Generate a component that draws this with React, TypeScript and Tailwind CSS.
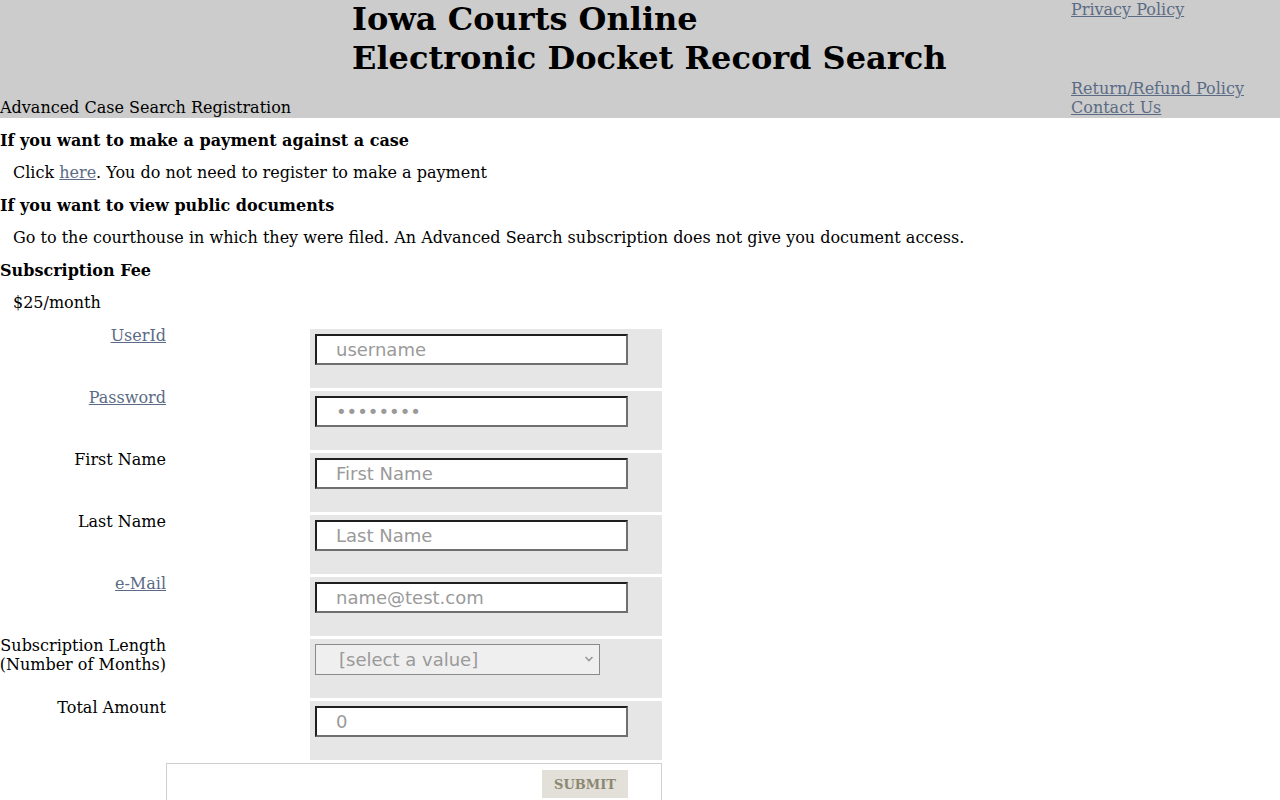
import React from 'react';

const serif = '"DejaVu Serif", "Liberation Serif", serif';
const sans = '"DejaVu Sans", "Liberation Sans", sans-serif';

const linkCls = 'text-[#5b6b85] underline';

function TextInput({ placeholder, type = 'text' }: { placeholder: string; type?: string }) {
  return (
    <input
      type={type}
      placeholder={placeholder}
      className="w-[313px] h-[31px] bg-white border-2 border-t-[#1f1f1f] border-l-[#1f1f1f] border-b-[#6f6f6f] border-r-[#6f6f6f] pl-[19px] text-[18px] text-[#333] placeholder:text-[#9a9a9a] outline-none"
      style={{ fontFamily: sans }}
    />
  );
}

type Row = { label: React.ReactNode; field: React.ReactNode };

export default function App() {
  const rows: Row[] = [
    { label: <a href="#" className={linkCls}>UserId</a>, field: <TextInput placeholder="username" /> },
    { label: <a href="#" className={linkCls}>Password</a>, field: <TextInput placeholder="••••••••" /> },
    { label: 'First Name', field: <TextInput placeholder="First Name" /> },
    { label: 'Last Name', field: <TextInput placeholder="Last Name" /> },
    { label: <a href="#" className={linkCls}>e-Mail</a>, field: <TextInput placeholder="name@test.com" /> },
    {
      label: (
        <>
          Subscription Length
          <br />
          (Number of Months)
        </>
      ),
      field: (
        <div className="relative w-[285px] h-[31px]">
          <select
            disabled
            className="appearance-none w-full h-full bg-[#efefef] border border-[#8a8a8a] pl-[23px] text-[18px] text-[#9a9a9a]"
            style={{ fontFamily: sans }}
          >
            <option>[select a value]</option>
          </select>
          <svg className="absolute right-[6px] top-[11px] pointer-events-none" width="10" height="8" viewBox="0 0 10 8">
            <path d="M1.5 2 L5 5.5 L8.5 2" fill="none" stroke="#9a9a9a" strokeWidth="1.6" />
          </svg>
        </div>
      ),
    },
    { label: 'Total Amount', field: <TextInput placeholder="0" /> },
  ];

  return (
    <div className="min-h-[800px] bg-white text-black text-[16px] leading-[19px]" style={{ fontFamily: serif }}>
      {/* header */}
      <div className="flex h-[118px] bg-[#cccccc]">
        <div className="w-[352px] flex flex-col justify-end pb-[1px]">
          <div>Advanced Case Search Registration</div>
        </div>
        <div className="flex-1">
          <h1 className="text-[32px] leading-[39px] font-bold">
            Iowa Courts Online
            <br />
            Electronic Docket Record Search
          </h1>
        </div>
        <div className="w-[209px] flex flex-col justify-between pb-[1px]">
          <a href="#" className={linkCls}>Privacy Policy</a>
          <div className="flex flex-col">
            <a href="#" className={linkCls}>Return/Refund Policy</a>
            <a href="#" className={linkCls}>Contact Us</a>
          </div>
        </div>
      </div>

      {/* info */}
      <div className="pt-[6px] leading-[32.5px]">
        <div className="font-bold pt-[2px] leading-[30.5px]">If you want to make a payment against a case</div>
        <div className="pl-[13px]">
          Click <a href="#" className={linkCls}>here</a>. You do not need to register to make a payment
        </div>
        <div className="font-bold pt-[2px] leading-[30.5px]">If you want to view public documents</div>
        <div className="pl-[13px]">
          Go to the courthouse in which they were filed. An Advanced Search subscription does not give you document access.
        </div>
        <div className="font-bold pt-[2px] leading-[30.5px]">Subscription Fee</div>
        <div className="pl-[13px]">$25/month</div>
      </div>

      {/* form */}
      <form className="mt-[7px] grid grid-cols-[166px_144px_352px]" onSubmit={e => e.preventDefault()}>
        {rows.map((r, i) => (
          <React.Fragment key={i}>
            <div className="h-[62px] flex justify-end">
              <div className="text-right whitespace-nowrap">{r.label}</div>
            </div>
            <div />
            <div className="h-[62px] pt-[3px]">
              <div className="h-[59px] bg-[#e6e6e6] pt-[5px] pl-[5px]">{r.field}</div>
            </div>
          </React.Fragment>
        ))}
        <div />
        <div className="col-span-2 pt-[3px]">
          <div className="h-[50px] border border-[#cfcfcf] flex justify-end items-start pt-[6px] pr-[33px]">
            <button
              type="submit"
              className="w-[86px] h-[28px] bg-[#e2e0d8] text-[#8c8772] text-[13px] font-bold"
              style={{ fontFamily: serif }}
            >
              SUBMIT
            </button>
          </div>
        </div>
      </form>
    </div>
  );
}
